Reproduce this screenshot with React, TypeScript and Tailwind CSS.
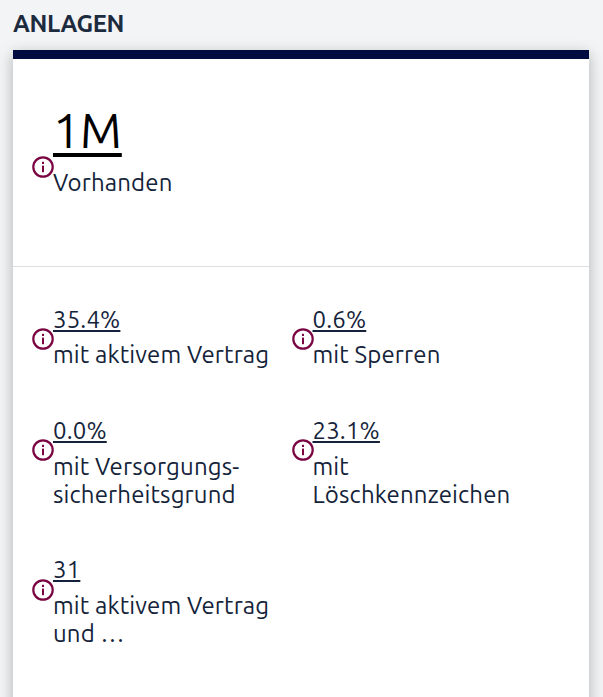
import React from "react";

const font = "font-['Ubuntu','Noto_Sans','Open_Sans',sans-serif]";

const InfoIcon = () => (
  <svg viewBox="0 0 22 22" className="h-[22px] w-[22px] shrink-0" fill="none">
    <circle cx="11" cy="11" r="9.7" stroke="#7a0441" strokeWidth="2.2" />
    <rect x="10" y="9.6" width="2" height="6.6" fill="#7a0441" />
    <rect x="10" y="5.8" width="2" height="2.2" fill="#7a0441" />
  </svg>
);

interface StatProps {
  value: string;
  label: React.ReactNode;
}

const Stat = ({ value, label }: StatProps) => (
  <div className="flex items-start">
    <div className="mr-[-1px] mt-[22.4px]">
      <InfoIcon />
    </div>
    <div className="text-2xl leading-[28px] tracking-[0.14px] text-[#14233a]">
      <div className="underline decoration-2 underline-offset-2">{value}</div>
      <div className="mt-[7.5px]">{label}</div>
    </div>
  </div>
);

const stats: StatProps[] = [
  { value: "35.4%", label: "mit aktivem Vertrag" },
  { value: "0.6%", label: "mit Sperren" },
  {
    value: "0.0%",
    label: (
      <>
        mit Versorgungs-
        <br />
        sicherheitsgrund
      </>
    ),
  },
  {
    value: "23.1%",
    label: (
      <>
        mit
        <br />
        Löschkennzeichen
      </>
    ),
  },
  {
    value: "31",
    label: (
      <>
        mit aktivem Vertrag
        <br />
        und …
      </>
    ),
  },
];

export default function App() {
  return (
    <div className={`${font} h-[697px] w-[603px] overflow-hidden bg-[#f3f4f6] pl-[13px] pr-[14px]`}>
      <h2 className="pt-[10px] text-2xl font-semibold leading-[28px] tracking-[-0.4px] text-[#1c2b3e]">ANLAGEN</h2>
      <div className="mt-[12px] min-h-[660px] border-t-[9px] border-[#000c3f] bg-white shadow-[0_4px_14px_rgba(0,0,0,0.28)]">
        <div className="h-[208px] border-b border-[#dcdde0] pl-[19px] pt-[41px]">
          <div className="flex items-start">
            <div className="mr-[-1px] mt-[56px]">
              <InfoIcon />
            </div>
            <div>
              <div className="text-[48px] leading-[60px] text-black underline decoration-[4px] underline-offset-[5px]">
                1M
              </div>
              <div className="mt-[9px] text-2xl leading-[28px] tracking-[0.14px] text-[#14233a]">Vorhanden</div>
            </div>
          </div>
        </div>
        <div className="grid grid-cols-[259.5px_259px] gap-y-[47.8px] pl-[19px] pt-[38.8px]">
          {stats.map((s) => (
            <Stat key={s.value} value={s.value} label={s.label} />
          ))}
        </div>
      </div>
    </div>
  );
}
